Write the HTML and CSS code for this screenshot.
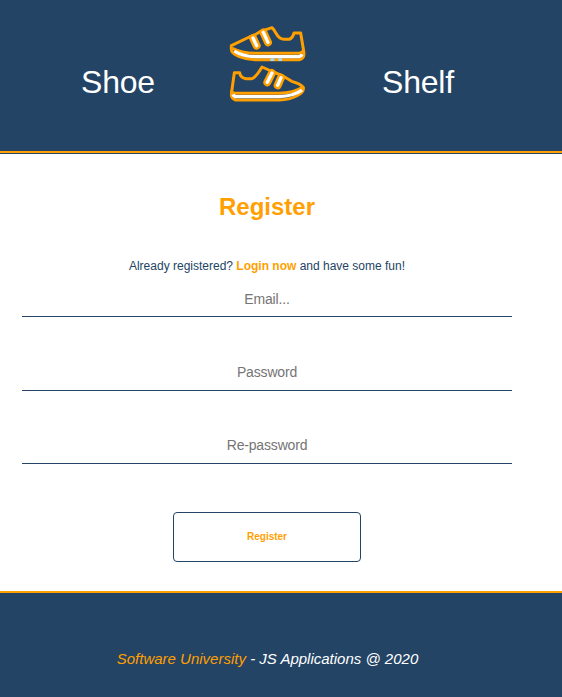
FILE: index.html
```html
<!DOCTYPE html>
<html lang="en">
<head>
<meta charset="utf-8">
<title>Shoe Shelf</title>
<link rel="stylesheet" href="styles.css">
</head>
<body>
<header class="header">
  <nav class="nav">
    <span class="brand">Shoe</span>
    <svg class="logo" viewBox="0 0 300 285" aria-label="Shoe Shelf">
      <g class="outline">
        <path d="M34 92 L88 66 Q96 63 104 60 L120 50 L156 38 Q164 46 168 55 Q178 73 192 73 L208 73 Q218 69 222 54 H242 L251 108 Q255 132 238 134 H105 C75 133 33 121 34 102 Z"/>
        <path d="M37 100 Q64 114 105 115 H238 Q249 113 250 106"/>
        <path d="M43 173 H59 Q61 189 78 191 H96 Q107 188 126 156 L160 171 L185 181 L215 199 Q241 206 250 217 C254 235 220 254 177 255 H47 Q34 251 34 238 Z"/>
        <path d="M34 226 Q35 235 49 235 H178 Q220 234 249 216"/>
      </g>
      <path class="sole" d="M43 108 Q66 124 106 125 H238 Q244 124 246 118"/>
      <path class="sole" d="M39 238 Q42 245 50 245 H177 Q222 243 246 225"/>
      <path class="strap-edge" d="M99 69 L110 92M130 52 L144 82M156 174 L142 202M183 188 L173 211"/>
      <path class="strap" d="M99 69 L110 92M130 52 L144 82M156 174 L142 202M183 188 L173 211"/>
      <path class="mark" d="M151 134 H163M175 134 H186"/>
    </svg>
    <span class="brand">Shelf</span>
  </nav>
</header>
<main class="main">
  <h1 class="title">Register</h1>
  <p class="message">Already registered? <a class="link">Login now</a> and have some fun!</p>
  <form class="form">
    <input class="field" type="text" placeholder="Email...">
    <input class="field" type="password" placeholder="Password">
    <input class="field" type="password" placeholder="Re-password">
    <button class="submit" type="button">Register</button>
  </form>
</main>
<footer class="footer">
  <p class="credit"><a class="credit-link">Software University</a> - JS Applications @ 2020</p>
</footer>
</body>
</html>
```
FILE: styles.css
```css
* { box-sizing: border-box; }
body {
  margin: 0;
  height: 697px;
  display: flex;
  flex-direction: column;
  overflow: hidden;
  background: #fff;
  color: #234465;
  font-family: "Liberation Sans", Arial, sans-serif;
}
.header {
  height: 154px;
  background: #234465;
  border-bottom: 1px solid #234465;
}
.nav {
  height: 153px;
  padding: 15px 69px 0 43px;
  display: grid;
  grid-template-columns: 150px 1fr 150px;
  justify-items: center;
  align-items: start;
  border-bottom: 2px solid #ff9f00;
}
.brand {
  margin-top: 49px;
  color: #fff;
  font-size: 32px;
  line-height: 36px;
  letter-spacing: -0.2px;
}
.logo { width: 100px; height: 95px; margin-left: 4px; }
.outline { fill: none; stroke: #ff9f00; stroke-width: 9; stroke-linejoin: round; }
.sole { fill: none; stroke: #fff; stroke-width: 10; }
.strap-edge { fill: none; stroke: #ff9f00; stroke-width: 24; stroke-linecap: round; }
.strap { fill: none; stroke: #fff; stroke-width: 10; stroke-linecap: round; }
.mark { fill: none; stroke: #a9d8ef; stroke-width: 8; }
.main {
  height: 437px;
  width: 490px;
  margin-left: 22px;
  text-align: center;
}
.title {
  margin: 39px 0 0;
  color: #ff9f00;
  font-size: 24px;
  line-height: 28px;
}
.message { margin: 38px 0 0; font-size: 12px; line-height: 14px; }
.link { color: #ff9f00; font-weight: bold; }
.form { display: flex; flex-direction: column; align-items: center; }
.field {
  width: 490px;
  height: 35px;
  margin: 9px 0 0;
  padding: 0;
  border: 0;
  border-bottom: 1px solid #234465;
  background: none;
  text-align: center;
  font: 14px "Liberation Sans", Arial, sans-serif;
  letter-spacing: -0.17px;
}
.field + .field { margin-top: 39px; padding-bottom: 2px; }
.field + .field + .field { margin-top: 38px; }
.field::placeholder { color: #757575; }
.submit {
  width: 188px;
  height: 50px;
  margin-top: 48px;
  padding: 0 0 2px;
  border: 1px solid #234465;
  border-radius: 4px;
  background: #fff;
  color: #ff9f00;
  font: bold 10px "Liberation Sans", Arial, sans-serif;
}
.footer {
  flex: 1;
  padding-right: 27px;
  border-top: 2px solid #ff9f00;
  background: #234465;
}
.credit {
  margin: 57px 0 0;
  color: #fff;
  font-size: 15px;
  font-style: italic;
  line-height: 18px;
  text-align: center;
}
.credit-link { color: #ff9f00; }
```
